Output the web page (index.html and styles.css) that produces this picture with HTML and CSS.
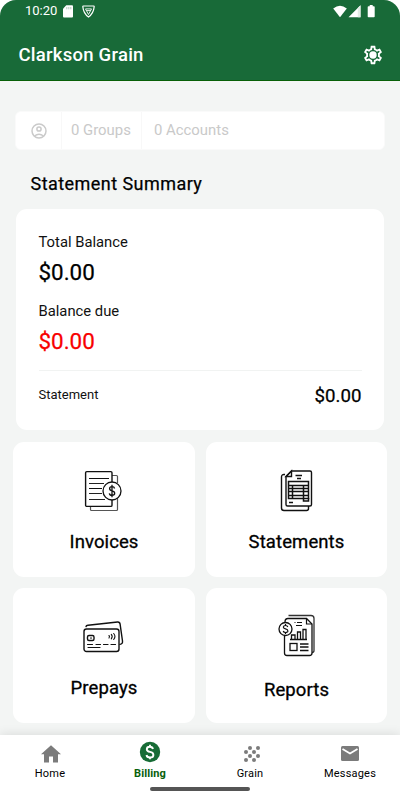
FILE: index.html
```html
<!DOCTYPE html>
<html lang="en">
<head>
<meta charset="utf-8">
<title>Clarkson Grain</title>
<link rel="stylesheet" href="styles.css">
</head>
<body>
<div class="app">
  <header class="header">
    <div class="status">
      <span class="clock">10:20</span>
      <svg class="sd" width="10" height="13" viewBox="0 0 10 13"><path d="M3.3.3H9q1 0 1 1V11.500q0 1-1 1H1q-1 0-1-1V3.700z" fill="#fff"/><path d="M3.800 2v2.300M5.800 2v2.300M7.800 2v2.300" stroke="#b5c9bb"/></svg>
      <svg class="shield" width="13" height="13" viewBox="0 0 13 13" fill="none" stroke="#fff" stroke-width="1.200"><path d="M1.300 1h10.400q.5 0 .5.600Q11.500 8.500 6.500 12 1.500 8.500.8 1.600.8 1 1.300 1z"/><path d="M3.500 3.900h6L6.500 9.500z" stroke-width=".9"/><path d="M4.500 5.600h4" stroke-width=".9"/></svg>
      <svg class="signals" width="42" height="13" viewBox="0 0 42 13" fill="#fff"><path d="M.2 3.500Q7-2.200 13.800 3.500L7 12.200z"/><path d="M27.500.2v12H15.500z"/><path d="M24.800 3v9.200h2.700V.2z" fill="#e2ece5"/><path d="M35.500 1.200h1.200V0h3v1.200h1.200q.8 0 .8.800v9.400q0 .8-.8.800h-5.400q-.8 0-.8-.8V2q0-.8.800-.8z"/></svg>
    </div>
    <div class="titlebar">
      <h1>Clarkson Grain</h1>
      <svg class="gear" width="22" height="22" viewBox="0 0 24 24"><path fill="#fff" d="M19.430 12.980c.04-.32.070-.64.070-.98s-.03-.66-.07-.98l2.110-1.650c.19-.15.240-.42.120-.64l-2-3.460c-.09-.16-.26-.25-.44-.25-.06 0-.12.010-.17.030l-2.490 1c-.52-.4-1.080-.73-1.690-.98l-.38-2.650C14.460 2.180 14.250 2 14 2h-4c-.25 0-.46.180-.49.420l-.38 2.650c-.61.250-1.170.59-1.690.98l-2.490-1c-.06-.02-.12-.03-.18-.03-.17 0-.34.090-.43.250l-2 3.460c-.13.220-.07.490.12.640l2.110 1.650c-.04.320-.07.650-.07.980s.03.660.07.980l-2.110 1.650c-.19.150-.24.420-.12.640l2 3.460c.09.160.26.250.44.250.06 0 .12-.01.170-.03l2.490-1c.52.400 1.080.730 1.690.98l.38 2.650c.03.240.24.420.49.420h4c.25 0 .46-.18.490-.42l.38-2.650c.61-.25 1.170-.59 1.690-.98l2.490 1c.06.020.12.030.18.030.17 0 .34-.09.430-.25l2-3.460c.12-.22.070-.49-.12-.64l-2.110-1.650zm-1.980-1.710c.04.310.05.520.05.730s-.02.430-.05.730l-.14 1.130.89.700 1.080.84-.7 1.210-1.270-.51-1.040-.42-.9.680c-.43.320-.84.560-1.250.73l-1.060.43-.16 1.130-.2 1.350h-1.400l-.19-1.350-.16-1.130-1.060-.43c-.43-.18-.83-.41-1.230-.71l-.91-.7-1.060.43-1.270.51-.7-1.210 1.080-.84.890-.7-.14-1.130c-.03-.31-.05-.54-.05-.74s.02-.43.050-.73l.14-1.130-.89-.7-1.080-.84.700-1.210 1.270.51 1.040.42.900-.68c.43-.32.840-.56 1.250-.73l1.060-.43.160-1.130.2-1.350h1.390l.19 1.350.16 1.130 1.060.43c.43.180.83.410 1.230.71l.91.700 1.060-.43 1.270-.51.700 1.210-1.070.85-.89.700.14 1.130z"/><circle cx="12" cy="12" r="4" fill="#fff"/></svg>
    </div>
  </header>
  <main class="main">
    <div class="filter">
      <div class="person"><svg width="16" height="16" viewBox="0 0 16 16" fill="none" stroke="#cacaca" stroke-width="1.500"><circle cx="8" cy="8" r="7"/><circle cx="8" cy="6" r="2.100"/><path d="M3.500 13Q8 9.500 12.500 13"/></svg></div>
      <div class="groups">0 Groups</div>
      <div class="accounts">0 Accounts</div>
    </div>
    <h2>Statement Summary</h2>
    <section class="summary">
      <div class="label">Total Balance</div>
      <div class="amount">$0.00</div>
      <div class="label due-label">Balance due</div>
      <div class="amount due">$0.00</div>
      <div class="statement"><span>Statement</span><span class="value">$0.00</span></div>
    </section>
    <section class="tiles">
      <div class="tile invoices">
        <svg width="42" height="44" viewBox="0 0 42 44" fill="none" stroke="#111" stroke-width="1.200"><path d="M6.500 37v3.500q0 1 1 1h25q1 0 1-1V27M28 6.500h4.500q1 0 1 1V14" stroke="#555"/><rect x="1.600" y="2.600" width="26.400" height="34.800" rx="1.200" fill="#fff" stroke-width="1.400"/><path d="M5 9.500h20M5 19.500h13"/><path d="M5 14.500h15M5 24.500h13M5 30.500h16" stroke="#222"/><circle cx="28" cy="22" r="9" fill="#fff" stroke-width="1.300"/><path d="M30.600 19.500q-.4-1.800-2.600-1.800-2.400 0-2.400 1.900 0 1.800 2.400 2.300 2.700.5 2.700 2.400 0 2-2.700 2-2.400 0-2.700-2M28 15.800v12.400" stroke-width="1.300"/></svg>
        <span>Invoices</span>
      </div>
      <div class="tile">
        <svg width="34" height="44" viewBox="0 0 34 44" fill="none" stroke="#111" stroke-width="1.400"><path d="M5 5.500H4q-2.500 0-2.500 2.500v31q0 2.500 2.500 2.500h22.500q2 0 2-2V37"/><path d="M11.500 2H30q1.500 0 1.500 1.500v32q0 1.500-1.500 1.500H7.500Q6 37 6 35.500V7.500z" fill="#fff"/><path d="M11.500 2v5.500H6zM15.500 6.500h6.500M17 9.500h4"/><path d="M8.500 12.500h20v17h-20zM8.500 16.500h20" stroke-width="1.500"/><path d="M12.500 16.500v13M23.500 16.500v15.500h5v-3M8.500 19.500h20M8.500 22.500h20M8.500 26.500h20M9 33.500h4" stroke-width="1.500"/></svg>
        <span>Statements</span>
      </div>
      <div class="tile">
        <svg class="cards" width="42" height="44" viewBox="0 0 42 44" fill="none" stroke="#111" stroke-width="1.400" stroke-linecap="round"><path d="M3 11.500Q3.200 10.500 5 10.300L34.500 7q2.300-.2 2.600 2.200L39.500 26q.3 3.200-2.500 3.400"/><rect x="1" y="14" width="35" height="22.500" rx="2.500" fill="#fff"/><rect x="4.500" y="20.500" width="6.500" height="5" rx="1.500"/><path d="M7.500 23h1M4.500 29.500h5M13 29.500h4.500M20.500 29.500H25M28 29.500h4.500" stroke-width="1.200"/><path d="M5 32.500h12M26 20.500q1 1 0 2.500M28.300 19.400q1.800 2.100 0 4.500M30.700 18.500q2.500 2.900 0 6" stroke-width="1.100"/></svg>
        <span>Prepays</span>
      </div>
      <div class="tile reports">
        <svg width="38" height="44" viewBox="0 0 38 44" fill="none" stroke="#111" stroke-width="1.300"><path d="M10.500 1.500H33q3 0 3 3v32q0 2-2 2" stroke="#333"/><path d="M7 8Q7 4.500 10 4.500h18.500L34 10v29q0 2.500-2.500 2.500H9Q6.500 41.500 6.500 39V18" fill="#fff"/><path d="M28.500 4.500V10H34M16.500 8.500h1M19 8.500h5M18 11.500h6" stroke-width="1.200"/><path d="M12 25.500h17M13.500 25v-4H17v4M19.500 25v-7h3v7M25 25v-9.500h3V25" stroke-width="1.300"/><rect x="12" y="29.500" width="7" height="7"/><path d="M22 30h8.500M22 33h8.500M22 36.500h8.500"/><circle cx="7.500" cy="15" r="6.500" fill="#fff"/><path d="M9.800 13q-.4-1.500-2.300-1.500T5.300 13.100q0 1.400 2.200 1.800 2.400.4 2.400 2t-2.400 1.600Q5.600 18.500 5.200 17M7.500 10v1.500M7.500 18.500V20" stroke-width="1.200"/></svg>
        <span>Reports</span>
      </div>
    </section>
  </main>
  <nav class="nav">
    <div class="items">
      <div class="item home"><svg width="24" height="24" viewBox="0 0 24 24" fill="#7b7b7b"><path d="M10 20.500v-6h4v6h5v-8.300h3L12 3.200 2 12.200h3v8.300z"/></svg><span>Home</span></div>
      <div class="item active"><svg width="24" height="24" viewBox="0 0 24 24"><circle cx="12" cy="12" r="10.200" fill="#176c36"/><path d="M15 9q-.5-2.300-3.200-2.300-3 0-3 2.500 0 2.100 3.200 2.700 3.400.6 3.400 3 0 2.600-3.400 2.600-3.100 0-3.500-2.500M12 4.700v2M12 17.300v2" fill="none" stroke="#fff" stroke-width="1.900"/></svg><span>Billing</span></div>
      <div class="item grain"><svg width="24" height="24" viewBox="0 0 24 24" fill="#7b7b7b"><circle cx="10" cy="6" r="2"/><circle cx="18" cy="6" r="2"/><circle cx="6" cy="10" r="2"/><circle cx="14" cy="10" r="2"/><circle cx="10" cy="14" r="2"/><circle cx="18" cy="14" r="2"/><circle cx="6" cy="18" r="2"/><circle cx="14" cy="18" r="2"/></svg><span>Grain</span></div>
      <div class="item"><svg width="24" height="24" viewBox="0 0 24 24"><rect x="3" y="4" width="18" height="15" rx="1.500" fill="#7b7b7b"/><path d="m4.500 7 7.500 4.500L19.500 7" fill="none" stroke="#fff" stroke-width="1.800"/></svg><span>Messages</span></div>
    </div>
    <div class="handle"></div>
  </nav>
</div>
</body>
</html>
```
FILE: styles.css
```css
* { box-sizing: border-box; }
body { margin: 0; background: #fff; font-family: Roboto, sans-serif; color: #000; }
svg { display: block; flex-shrink: 0; }
h1, h2 { margin: 0; font-weight: 500; }
.app { width: 400px; height: 800px; overflow: hidden; display: flex; flex-direction: column; background: #f3f5f4; border-radius: 16px 16px 0 0; }
.header { height: 81px; background: #186a38; border-bottom: 1px solid #086008; color: #fff; flex-shrink: 0; }
.status { height: 22px; padding: 0 25px; display: flex; align-items: center; }
.clock { font-size: 13px; line-height: 22px; width: 38px; }
.shield { margin-left: 9px; }
.signals { margin-left: auto; }
.titlebar { height: 66px; padding: 0 16px 0 18.500px; display: flex; align-items: center; justify-content: space-between; }
h1 { font-size: 18.500px; letter-spacing: .25px; line-height: 24px; }
.main { flex: 1; padding: 30px 13px 0; }
.filter { margin: 0 2px; height: 39px; background: #fff; border: 1px solid #fafafa; border-radius: 6px; display: flex; color: #c9c9c9; font-size: 14.900px; line-height: 37px; }
.person { width: 46px; display: flex; align-items: center; padding-left: 15px; border-right: 1px solid #f8f8f8; }
.groups { width: 80px; padding-left: 9px; border-right: 1px solid #f8f8f8; }
.accounts { padding-left: 12px; }
h2 { margin: 21px 0 0 17.500px; font-size: 18px; font-weight: 400; letter-spacing: .45px; line-height: 26px; -webkit-text-stroke: .25px currentColor; }
.summary { margin: 12px 3px; height: 221px; padding: 23px 22.500px 0; background: #fff; border-radius: 11px; }
.label { font-size: 14.800px; line-height: 20px; color: #111; }
.amount { height: 30px; margin-top: 5px; font-size: 22.400px; line-height: 30px; font-weight: 400; -webkit-text-stroke: .25px currentColor; }
.due-label { margin-top: 14px; }
.due { color: #f80000; }
.statement { margin-top: 14px; border-top: 1px solid #f1f3f2; height: 50px; display: flex; align-items: center; justify-content: space-between; font-size: 13px; }
.statement span:first-child { margin-top: -3px; color: #111; }
.value { font-size: 18.700px; font-weight: 400; -webkit-text-stroke: .25px currentColor; }
.tiles { display: grid; grid-template-columns: 182px 181px; grid-auto-rows: 135px; gap: 11px; }
.tile { background: #fff; border-radius: 11px; padding-top: 27px; display: flex; flex-direction: column; align-items: center; font-size: 18.500px; font-weight: 400; letter-spacing: .1px; -webkit-text-stroke: .3px currentColor; }
.tile span { margin-top: 17px; line-height: 24px; }
.invoices svg { margin-left: 2px; }
.reports { padding-top: 26px; }
.reports span { margin-top: 20px; }
.nav { height: 65px; background: #fff; box-shadow: 0 -1px 10px rgba(0,0,0,.1); flex-shrink: 0; position: relative; }
.items { display: grid; grid-template-columns: repeat(4, 1fr); height: 52px; }
.item { display: flex; flex-direction: column; align-items: center; padding-top: 7px; font-size: 11px; letter-spacing: .2px; }
.item span { line-height: 14px; margin-top: 1px; }
.home svg { margin-left: 2px; }
.grain svg { margin-left: 4px; }
.active { color: #07600b; font-weight: 700; padding-top: 5px; }
.active span { margin-top: 3px; letter-spacing: .1px; }
.handle { width: 100px; height: 4px; margin: 0 auto; background: #555; border-radius: 2px; }
```
